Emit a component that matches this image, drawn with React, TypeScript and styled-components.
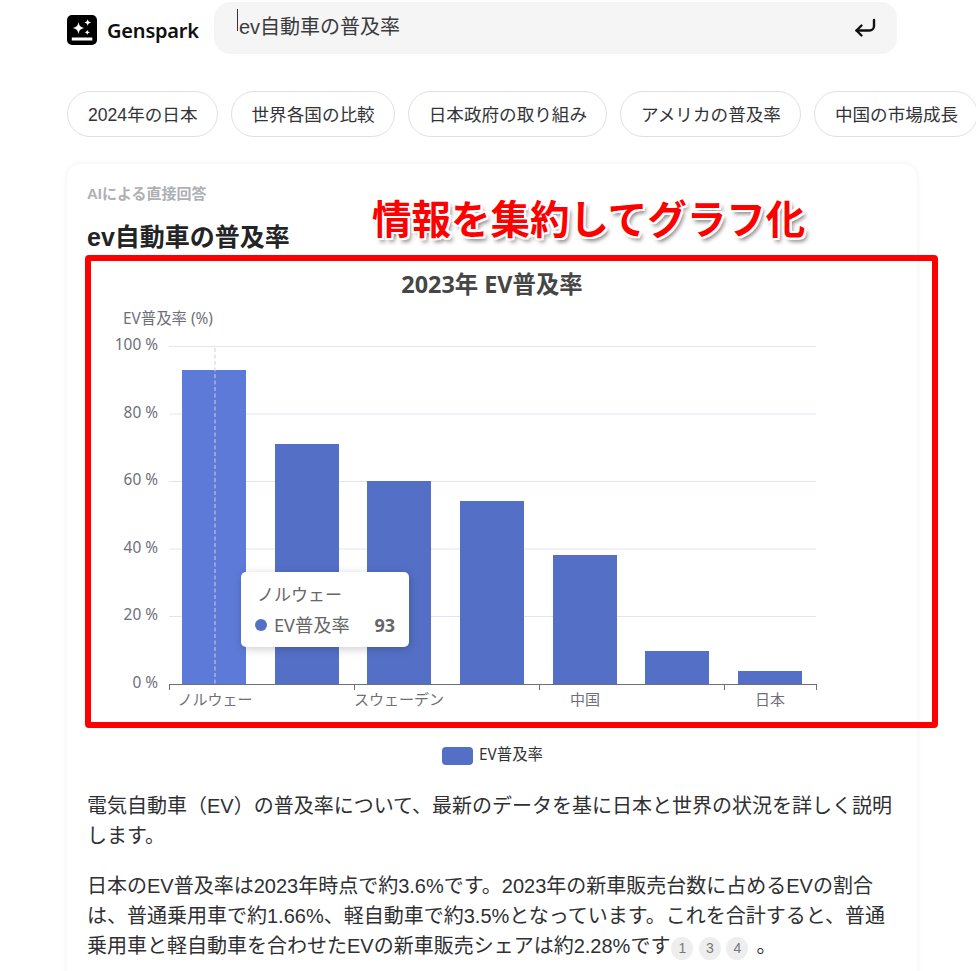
import React from "react";
import styled, { createGlobalStyle } from "styled-components";

const Global = createGlobalStyle`
  html, body { margin: 0; padding: 0; background: #fff; height: 971px; overflow: hidden; }
  body { font-family: "Liberation Sans", "Noto Sans CJK JP", sans-serif; color: #232425; }
`;

const Page = styled.div`
  width: 976px;
  height: 971px;
  overflow: hidden;
  padding-left: 67px;
  box-sizing: border-box;
`;
const Header = styled.header`
  display: flex;
  align-items: flex-start;
  padding-top: 2px;
  height: 52px;
  width: 830px;
`;
const Brand = styled.div`
  display: flex;
  align-items: center;
  gap: 10px;
  width: 147px;
  height: 56px;
  flex: none;
`;
const BrandName = styled.span`
  font-family: "Noto Sans", sans-serif;
  font-weight: 600;
  font-size: 20px;
  letter-spacing: -0.2px;
  color: #0f1012;
`;
const SearchBar = styled.div`
  position: relative;
  flex: none;
  width: 683px;
  height: 52px;
  border-radius: 16px;
  background: #f5f5f5;
  display: flex;
  align-items: flex-start;
  justify-content: space-between;
  padding: 7px 20px 0 23px;
  box-sizing: border-box;
`;
const SearchText = styled.span`
  font-size: 20px;
  line-height: 30px;
  color: #3a3b3d;
  border-left: 1px solid #333;
  height: 22px;
  display: block;
  white-space: nowrap;
`;
const SearchInner = styled.span`
  display: block;
  margin: 3px 0 0 1px;
`;
const EnterSlot = styled.span`
  display: block;
  margin-top: 7px;
`;
const Chips = styled.nav`
  display: flex;
  gap: 13px;
  margin-top: 37px;
  width: 960px;
`;
const Chip = styled.span`
  flex: none;
  height: 46px;
  box-sizing: border-box;
  padding: 0 19px 2px 20px;
  border: 1px solid #dfe0e2;
  border-radius: 23px;
  display: flex;
  align-items: center;
  font-size: 17.6px;
  color: #333437;
  white-space: nowrap;
`;
const Card = styled.main`
  position: relative;
  margin-top: 27px;
  width: 850px;
  height: 900px;
  box-sizing: border-box;
  padding: 20px 20px 0;
  border-radius: 14px;
  background: #fff;
  box-shadow: 0 0 6px rgba(0, 0, 0, 0.07);
`;
const Label = styled.div`
  font-size: 15px;
  line-height: 20px;
  font-weight: 700;
  color: #aeb0b4;
`;
const Heading = styled.h1`
  margin: 16px 0 0;
  font-size: 25px;
  line-height: 34px;
  font-weight: 700;
  color: #232425;
`;
const ChartBox = styled.section`
  position: relative;
  margin-top: 8px;
  width: 810px;
  height: 508px;
`;
const ChartSvg = styled.svg`
  display: block;
  font-family: "Noto Sans", "Noto Sans CJK JP", sans-serif;
`;
const Tooltip = styled.div`
  position: absolute;
  left: 154px;
  top: 310px;
  width: 168px;
  height: 75px;
  box-sizing: border-box;
  padding: 11px 14px 0 16px;
  background: #fff;
  border-radius: 5px;
  box-shadow: 1px 2px 10px rgba(0, 0, 0, 0.2);
  font-family: "Noto Sans", "Noto Sans CJK JP", sans-serif;
  color: #666;
`;
const TipTitle = styled.div`
  font-size: 17px;
  line-height: 24px;
`;
const TipRow = styled.div`
  display: flex;
  align-items: center;
  margin: 6px 0 0 -2px;
  font-size: 18.2px;
  line-height: 24px;
`;
const TipDot = styled.i`
  width: 12px;
  height: 12px;
  border-radius: 50%;
  background: #5470c6;
  margin-right: 7px;
`;
const TipValue = styled.b`
  margin-left: auto;
  font-size: 18px;
  color: #666;
`;
const Highlight = styled.div`
  position: absolute;
  left: 18px;
  top: 91px;
  width: 853px;
  height: 473px;
  box-sizing: border-box;
  border: 6px solid #ff0000;
  border-radius: 4px;
  pointer-events: none;
`;
const Callout = styled.div`
  position: absolute;
  left: 305px;
  top: 28px;
  font-size: 39.5px;
  line-height: 50px;
  font-weight: 700;
  white-space: nowrap;
  color: #ff0000;
  font-family: "Noto Sans CJK JP", sans-serif;
  text-shadow:
    -2px -2px 0 #fff, 2px -2px 0 #fff, -2px 2px 0 #fff, 2px 2px 0 #fff,
    0 -2px 0 #fff, 0 2px 0 #fff, -2px 0 0 #fff, 2px 0 0 #fff,
    3px 4px 4px rgba(0, 0, 0, 0.5);
`;
const Body = styled.div`
  margin-top: 21px;
`;
const Para = styled.p`
  margin: 0 0 20px;
  font-size: 20px;
  line-height: 30px;
  color: #2f3032;
`;
const CiteGroup = styled.span`
  display: inline-flex;
  align-items: center;
  gap: 5.5px;
  margin: 0 8px 0 1px;
  vertical-align: 0;
`;
const Cite = styled.span`
  display: flex;
  align-items: center;
  justify-content: center;
  width: 22px;
  height: 23px;
  border-radius: 50%;
  background: #eeeeee;
  color: #77787b;
  font-size: 14px;
  line-height: 1;
`;

const Logo = () => (
  <svg width="30" height="30" viewBox="0 0 30 30" aria-hidden>
    <rect width="30" height="30" rx="5" fill="#000" />
    <path d="M11.5 7 C12.2 10.8 13.7 12.3 17.5 13 C13.7 13.7 12.2 15.2 11.5 19 C10.8 15.2 9.3 13.7 5.5 13 C9.3 12.3 10.8 10.8 11.5 7Z" fill="#fff" />
    <path d="M20.7 4 C21.1 6.2 22 7 24.2 7.5 C22 8 21.1 8.8 20.7 11 C20.3 8.8 19.4 8 17.2 7.5 C19.4 7 20.3 6.2 20.7 4Z" fill="#fff" />
    <path d="M20.3 14.7 C20.6 16.4 21.3 17 23 17.4 C21.3 17.8 20.6 18.4 20.3 20.1 C20 18.4 19.3 17.8 17.6 17.4 C19.3 17 20 16.4 20.3 14.7Z" fill="#fff" />
    <rect x="4.8" y="22.5" width="20.5" height="3" fill="#fff" />
  </svg>
);

const EnterIcon = () => (
  <svg width="24" height="24" viewBox="0 0 24 24" fill="none" stroke="#111" strokeWidth="2.4" strokeLinecap="round" strokeLinejoin="round" aria-hidden>
    <path d="M21 4v6a4.5 4.5 0 0 1-4.5 4.5H3.5" />
    <path d="M8.5 9.5l-5 5 5 5" />
  </svg>
);

const chips = ["2024年の日本", "世界各国の比較", "日本政府の取り組み", "アメリカの普及率", "中国の市場成長"];

const bars = [
  { x: 182, top: 370, fill: "#5d7ad8" },
  { x: 275, top: 444, fill: "#5470c6" },
  { x: 367, top: 481, fill: "#5470c6" },
  { x: 460, top: 501, fill: "#5470c6" },
  { x: 553, top: 555, fill: "#5470c6" },
  { x: 645, top: 651, fill: "#5470c6" },
  { x: 738, top: 671, fill: "#5470c6" },
];
const yTicks = [
  { y: 346.5, t: "100 %" },
  { y: 414, t: "80 %" },
  { y: 481.5, t: "60 %" },
  { y: 549, t: "40 %" },
  { y: 616.5, t: "20 %" },
  { y: 684, t: "0 %" },
];
const xTicks = [169, 354, 539, 724, 816];
const xLabels = [
  { x: 215, t: "ノルウェー" },
  { x: 399, t: "スウェーデン" },
  { x: 585, t: "中国" },
  { x: 770, t: "日本" },
];

const Chart = () => (
  <ChartSvg width="810" height="508" viewBox="87 262 810 508">
    <text x="492" y="293" textAnchor="middle" fontSize="23.4" fontWeight="700" fill="#464646">2023年 EV普及率</text>
    <text x="123" y="324" fontSize="15.4" fill="#6e7079">EV普及率 (%)</text>
    {yTicks.map((t) => (
      <g key={t.t}>
        {t.y < 684 && <line x1="169" x2="816" y1={t.y} y2={t.y} stroke="#e0e6f1" />}
        <text x="158" y={t.y + 3.5} textAnchor="end" fontSize="15.4" fill="#6e7079">{t.t}</text>
      </g>
    ))}
    {bars.map((b) => (
      <rect key={b.x} x={b.x} y={b.top} width="64" height={684 - b.top} fill={b.fill} />
    ))}
    <line x1="215" x2="215" y1="348" y2="684" stroke="#cdd0da" strokeDasharray="4 2.5" />
    <line x1="169" x2="816" y1="684.5" y2="684.5" stroke="#6e7079" />
    {xTicks.map((x) => (
      <line key={x} x1={x + 0.5} x2={x + 0.5} y1="684" y2="690" stroke="#6e7079" />
    ))}
    {xLabels.map((l) => (
      <text key={l.t} x={l.x} y="705" textAnchor="middle" fontSize="15" fill="#6e7079">{l.t}</text>
    ))}
    <rect x="442" y="747" width="31" height="18" rx="4" fill="#5470c6" />
    <text x="479" y="760" fontSize="15.4" fill="#333">EV普及率</text>
  </ChartSvg>
);

export default function App() {
  return (
    <Page>
      <Global />
      <Header>
        <Brand>
          <Logo />
          <BrandName>Genspark</BrandName>
        </Brand>
        <SearchBar>
          <SearchText>
            <SearchInner>ev自動車の普及率</SearchInner>
          </SearchText>
          <EnterSlot>
            <EnterIcon />
          </EnterSlot>
        </SearchBar>
      </Header>
      <Chips>
        {chips.map((c) => (
          <Chip key={c}>{c}</Chip>
        ))}
      </Chips>
      <Card>
        <Label>AIによる直接回答</Label>
        <Heading>ev自動車の普及率</Heading>
        <ChartBox>
          <Chart />
          <Tooltip>
            <TipTitle>ノルウェー</TipTitle>
            <TipRow>
              <TipDot />
              EV普及率
              <TipValue>93</TipValue>
            </TipRow>
          </Tooltip>
        </ChartBox>
        <Body>
          <Para>電気自動車（EV）の普及率について、最新のデータを基に日本と世界の状況を詳しく説明します。</Para>
          <Para>
            日本のEV普及率は2023年時点で約3.6%です。2023年の新車販売台数に占めるEVの割合は、普通乗用車で約1.66%、軽自動車で約3.5%となっています。これを合計すると、普通乗用車と軽自動車を合わせたEVの新車販売シェアは約2.28%です
            <CiteGroup>
              <Cite>1</Cite>
              <Cite>3</Cite>
              <Cite>4</Cite>
            </CiteGroup>
            。
          </Para>
        </Body>
        <Highlight />
        <Callout>情報を集約してグラフ化</Callout>
      </Card>
    </Page>
  );
}
